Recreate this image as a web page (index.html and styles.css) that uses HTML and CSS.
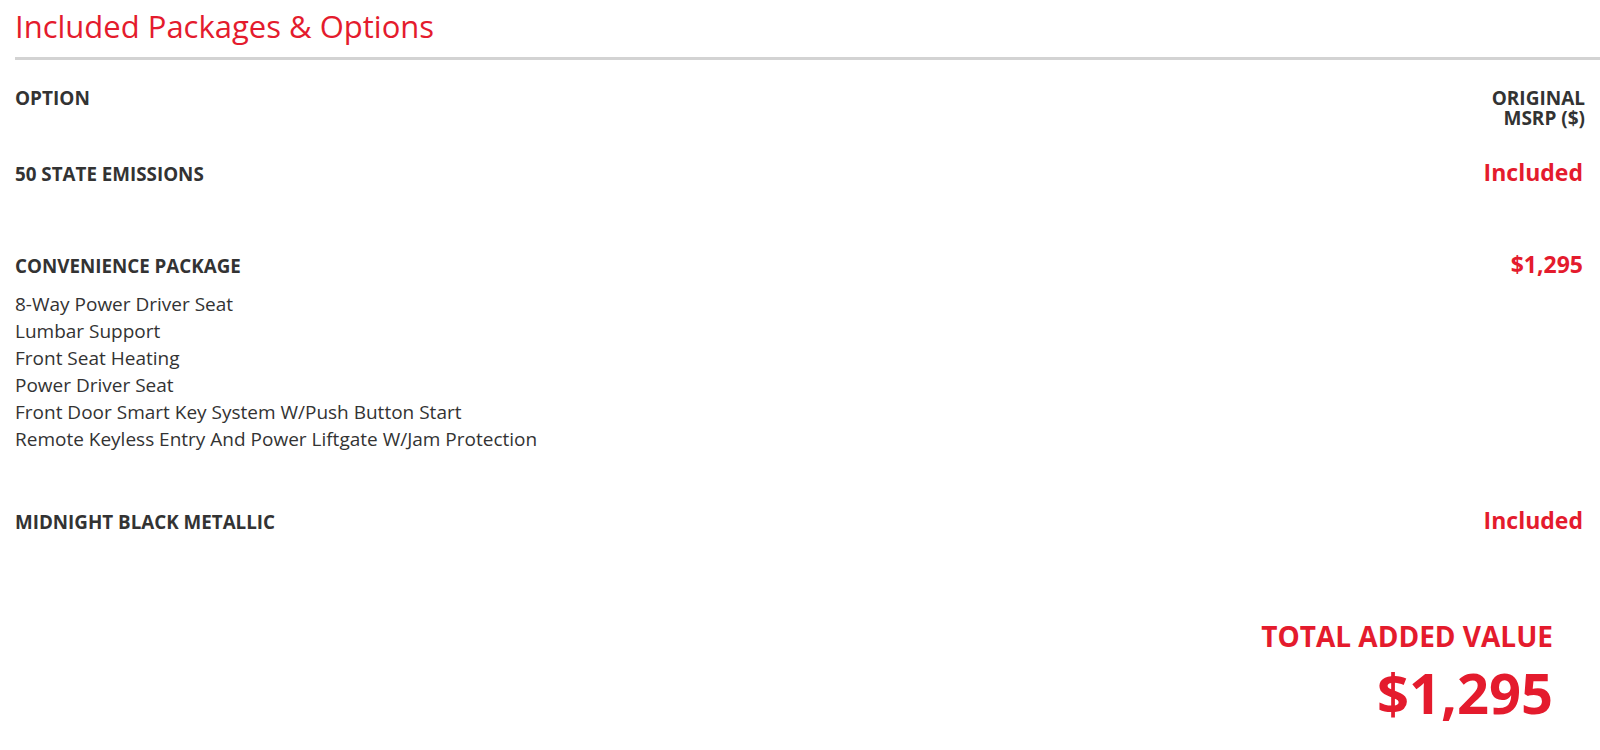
FILE: index.html
```html
<!DOCTYPE html>
<html lang="en">
<head>
<meta charset="utf-8">
<title>Included Packages &amp; Options</title>
<link rel="stylesheet" href="styles.css">
</head>
<body>
<section class="packages">
  <h2 class="packages-title">Included Packages &amp; Options</h2>
  <div class="table">
    <div class="table-head">
      <div class="head-option">OPTION</div>
      <div class="head-msrp">ORIGINAL<br>MSRP ($)</div>
    </div>
    <div class="row">
      <div class="row-top">
        <div class="row-name">50 STATE EMISSIONS</div>
        <div class="row-price">Included</div>
      </div>
      <ul class="row-items"></ul>
    </div>
    <div class="row">
      <div class="row-top">
        <div class="row-name">CONVENIENCE PACKAGE</div>
        <div class="row-price">$1,295</div>
      </div>
      <ul class="row-items">
        <li>8-Way Power Driver Seat</li>
        <li>Lumbar Support</li>
        <li>Front Seat Heating</li>
        <li>Power Driver Seat</li>
        <li>Front Door Smart Key System W/Push Button Start</li>
        <li>Remote Keyless Entry And Power Liftgate W/Jam Protection</li>
      </ul>
    </div>
    <div class="row">
      <div class="row-top">
        <div class="row-name">MIDNIGHT BLACK METALLIC</div>
        <div class="row-price">Included</div>
      </div>
      <ul class="row-items"></ul>
    </div>
  </div>
  <div class="total">
    <div class="total-label">TOTAL ADDED VALUE</div>
    <div class="total-value">$1,295</div>
  </div>
</section>
</body>
</html>
```

FILE: styles.css
```css
* {
  box-sizing: border-box;
}

html, body {
  margin: 0;
  padding: 0;
  background: #ffffff;
}

body {
  font-family: "Open Sans", "Liberation Sans", sans-serif;
  color: #333333;
}

.packages {
  padding-left: 15px;
}

.packages-title {
  margin: 0;
  padding-top: 6px;
  padding-bottom: 11px;
  font-size: 31px;
  line-height: 40px;
  font-weight: 400;
  color: #e41b2d;
  border-bottom: 3px solid #d3d3d3;
}

.table {
  padding-top: 28px;
  padding-right: 17px;
}

.table-head {
  display: flex;
  justify-content: space-between;
  align-items: flex-start;
  font-size: 19px;
  line-height: 20px;
  font-weight: 700;
  padding-bottom: 29px;
}

.head-msrp {
  text-align: right;
  margin-right: -2px;
}

.row {
  padding-bottom: 51.5px;
}

.row-top {
  display: flex;
  justify-content: space-between;
  align-items: baseline;
  line-height: 30px;
}

.row-name {
  font-size: 18.8px;
  font-weight: 700;
}

.row-price {
  font-size: 23px;
  font-weight: 700;
  color: #e41b2d;
}

.row-items {
  list-style: none;
  margin: 10px 0 0;
  padding: 0;
  font-size: 19px;
  line-height: 27.1px;
}

.row-items:empty {
  margin: 8px 0 0;
}

.total {
  display: flex;
  flex-direction: column;
  align-items: flex-end;
  padding-top: 20px;
  padding-right: 47px;
  color: #e41b2d;
  font-weight: 700;
}

.total-label {
  font-size: 28px;
  line-height: 40px;
}

.total-value {
  margin-top: 4px;
  font-size: 56px;
  line-height: 64px;
}
```
